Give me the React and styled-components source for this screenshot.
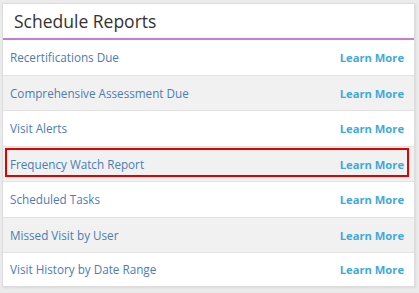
import React from 'react';
import styled, { createGlobalStyle } from 'styled-components';

const GlobalStyle = createGlobalStyle`
  html, body {
    margin: 0;
    padding: 0;
    background: #ebebeb;
    font-family: "Open Sans", "Noto Sans", sans-serif;
  }
`;

// Marco de la página
const Page = styled.div`
  width: 419px;
  height: 293px;
  padding: 3px 4px 0 2px;
  box-sizing: border-box;
`;

// Tarjeta principal
const Panel = styled.div`
  background: #ffffff;
  border: 1px solid #dcdcdc;
  box-shadow: 1px 1px 2px rgba(0, 0, 0, 0.08);
`;

const Header = styled.div`
  height: 34px;
  display: flex;
  align-items: center;
  padding-left: 11px;
  border-bottom: 2px solid #c27fd6;
  font-size: 17.5px;
  color: #333333;
`;

const List = styled.div`
  display: flex;
  flex-direction: column;
`;

// Cada fila del reporte
const Row = styled.div`
  height: ${props => (props.$last ? '33px' : '35.5px')};
  box-sizing: border-box;
  display: flex;
  align-items: center;
  justify-content: space-between;
  padding: ${props => (props.$last ? '0 10px 2px 7px' : '0 10px 0 7px')};
  background: ${props => (props.$alt ? '#f1f1f1' : '#ffffff')};
  border-bottom: ${props => (props.$last ? 'none' : '1px solid #e2e2e2')};
  position: relative;
`;

const Highlight = styled.div`
  position: absolute;
  left: 2px;
  right: 5px;
  top: 1px;
  bottom: 4px;
  border: 2px solid #e50000;
  pointer-events: none;
`;

const Name = styled.span`
  font-size: 11.7px;
  color: #4a7db6;
`;

const LearnMore = styled.span`
  font-size: 11.2px;
  font-weight: 700;
  color: #3fa9da;
  margin-top: 1px;
`;

const reports = [
  'Recertifications Due',
  'Comprehensive Assessment Due',
  'Visit Alerts',
  'Frequency Watch Report',
  'Scheduled Tasks',
  'Missed Visit by User',
  'Visit History by Date Range',
];

export default function App() {
  return (
    <Page>
      <GlobalStyle />
      <Panel>
        <Header>Schedule Reports</Header>
        <List>
          {reports.map((nombre, i) => (
            <Row key={nombre} $alt={i % 2 === 1} $last={i === reports.length - 1}>
              {nombre === 'Frequency Watch Report' && <Highlight />}
              <Name>{nombre}</Name>
              <LearnMore>Learn More</LearnMore>
            </Row>
          ))}
        </List>
      </Panel>
    </Page>
  );
}
